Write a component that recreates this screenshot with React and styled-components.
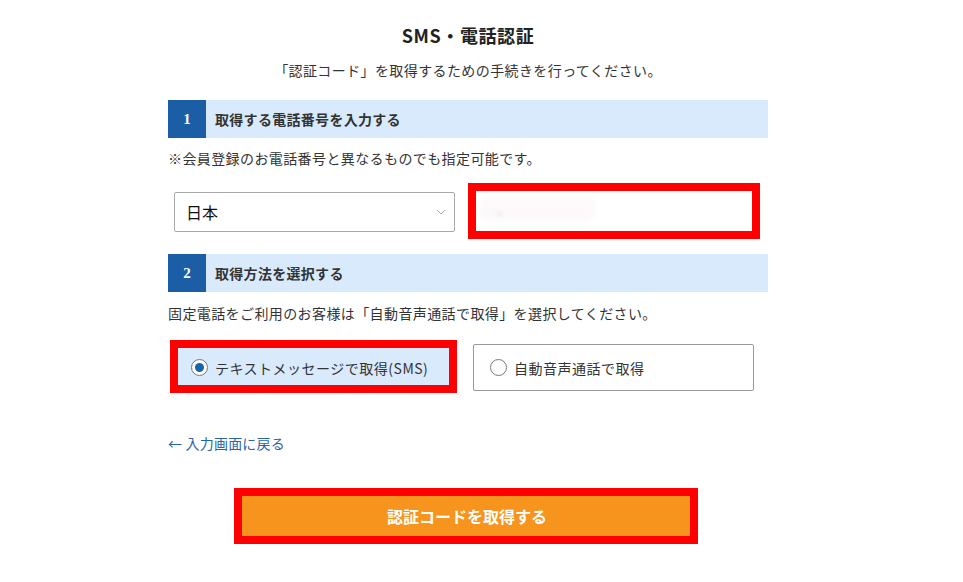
import React from "react";
import styled, { createGlobalStyle } from "styled-components";

const Global = createGlobalStyle`
  html, body { margin: 0; padding: 0; background: #fff; }
  body { font-family: "Noto Sans CJK JP", "Noto Sans", sans-serif; color: #333; }
  * { box-sizing: border-box; }
`;

const Page = styled.div`
  width: 963px;
  height: 582px;
  overflow: hidden;
  padding-top: 23px;
`;

const Container = styled.div`
  width: 600px;
  margin-left: 168px;
  display: flex;
  flex-direction: column;
`;

const Title = styled.h1`
  margin: 0;
  font-size: 18px;
  line-height: 24px;
  font-weight: 700;
  letter-spacing: 0.6px;
  text-align: center;
  color: #222;
`;

const Lead = styled.p`
  margin: 13px 0 0;
  font-size: 14px;
  line-height: 20px;
  letter-spacing: 0.4px;
  text-align: center;
  color: #333;
`;

const StepHeader = styled.div`
  margin-top: ${(p) => p.$mt}px;
  height: 38px;
  display: flex;
  align-items: stretch;
  background: #d9eafc;
`;

const StepNum = styled.div`
  width: 38px;
  background: #1b5ea6;
  color: #fff;
  font-family: "Liberation Serif", serif;
  font-weight: 700;
  font-size: 15px;
  display: flex;
  align-items: center;
  justify-content: center;
`;

const StepLabel = styled.div`
  display: flex;
  align-items: center;
  padding-left: 9px;
  font-size: 14px;
  font-weight: 700;
  letter-spacing: 0.3px;
  color: #333;
`;

const Note = styled.p`
  margin: ${(p) => p.$mt}px 0 0;
  font-size: 14px;
  line-height: 20px;
  letter-spacing: 0.4px;
  color: #333;
`;

const FieldRow = styled.div`
  margin: ${(p) => p.$mt}px 0 0 6px;
  display: grid;
  grid-template-columns: 281px 281px;
  column-gap: 18px;
`;

const Select = styled.div`
  height: 40px;
  border: 1px solid #a9a9a9;
  border-radius: 2px;
  display: flex;
  align-items: center;
  justify-content: space-between;
  padding: 0 8px 0 11px;
  font-size: 16px;
  color: #111;
`;

const Annotated = styled.div`
  position: relative;
  &::after {
    content: "";
    position: absolute;
    top: ${(p) => p.$t}px;
    left: ${(p) => p.$l}px;
    right: ${(p) => p.$r}px;
    bottom: ${(p) => p.$b}px;
    border: 8px solid #ff0000;
    pointer-events: none;
  }
`;

const Input = styled.div`
  height: 40px;
  background: #fff;
  position: relative;
`;

const Smudge = styled.span`
  position: absolute;
  left: 6px;
  top: 5px;
  width: 116px;
  height: 24px;
  background: #fdf9fa;
  filter: blur(2px);
  border-radius: 8px;
  &::after {
    content: "";
    position: absolute;
    left: 19px;
    top: 16px;
    width: 3px;
    height: 1px;
    background: #999;
  }
`;

const Option = styled.div`
  height: 47px;
  display: flex;
  align-items: center;
  gap: 7px;
  padding-left: 16px;
  border: 1px solid #999;
  border-radius: 2px;
  background: ${(p) => (p.$selected ? "#d9eafc" : "#fff")};
  font-size: 14px;
  letter-spacing: 0.5px;
  color: #333;
`;

const Radio = styled.span`
  width: 17px;
  height: 17px;
  border-radius: 50%;
  border: 1px solid #777;
  background: #fff;
  display: flex;
  align-items: center;
  justify-content: center;
  flex: none;
  &::after {
    content: "";
    width: 9px;
    height: 9px;
    border-radius: 50%;
    background: ${(p) => (p.$checked ? "#1d63a8" : "transparent")};
  }
`;

const BackLink = styled.a`
  margin-top: 42px;
  font-size: 14px;
  line-height: 20px;
  letter-spacing: 0.2px;
  color: #2a64a8;
  text-decoration: none;
  align-self: flex-start;
`;

const ButtonWrap = styled(Annotated)`
  margin: 39px 0 0 70px;
  width: 456px;
`;

const SubmitButton = styled.button`
  width: 100%;
  height: 48px;
  border: none;
  border-left: 2px solid #fbe3c4;
  background: #f7941e;
  color: #fff;
  font-family: "Noto Sans CJK JP", sans-serif;
  font-size: 16px;
  font-weight: 700;
  display: flex;
  align-items: center;
  justify-content: center;
  padding: 0;
`;

const Chevron = () => (
  <svg width="10" height="6" viewBox="0 0 10 6" fill="none">
    <path d="M1 1l4 4 4-4" stroke="#aaa" strokeWidth="1" />
  </svg>
);

export default function App() {
  return (
    <Page>
      <Global />
      <Container>
        <Title>SMS・電話認証</Title>
        <Lead>「認証コード」を取得するための手続きを行ってください。</Lead>

        <StepHeader $mt={20}>
          <StepNum>1</StepNum>
          <StepLabel>取得する電話番号を入力する</StepLabel>
        </StepHeader>
        <Note $mt={10}>※会員登録のお電話番号と異なるものでも指定可能です。</Note>

        <FieldRow $mt={24}>
          <Select>
            <span>日本</span>
            <Chevron />
          </Select>
          <Annotated $t={-9} $l={-5} $r={-6} $b={-7}>
            <Input>
              <Smudge />
            </Input>
          </Annotated>
        </FieldRow>

        <StepHeader $mt={22}>
          <StepNum>2</StepNum>
          <StepLabel>取得方法を選択する</StepLabel>
        </StepHeader>
        <Note $mt={11}>固定電話をご利用のお客様は「自動音声通話で取得」を選択してください。</Note>

        <FieldRow $mt={21}>
          <Annotated $t={-4} $l={-4} $r={-2} $b={-2}>
            <Option $selected>
              <Radio $checked />
              テキストメッセージで取得(SMS)
            </Option>
          </Annotated>
          <Option>
            <Radio />
            自動音声通話で取得
          </Option>
        </FieldRow>

        <BackLink href="#">← 入力画面に戻る</BackLink>

        <ButtonWrap $t={-4} $l={-4} $r={-4} $b={-4}>
          <SubmitButton>認証コードを取得する</SubmitButton>
        </ButtonWrap>
      </Container>
    </Page>
  );
}
